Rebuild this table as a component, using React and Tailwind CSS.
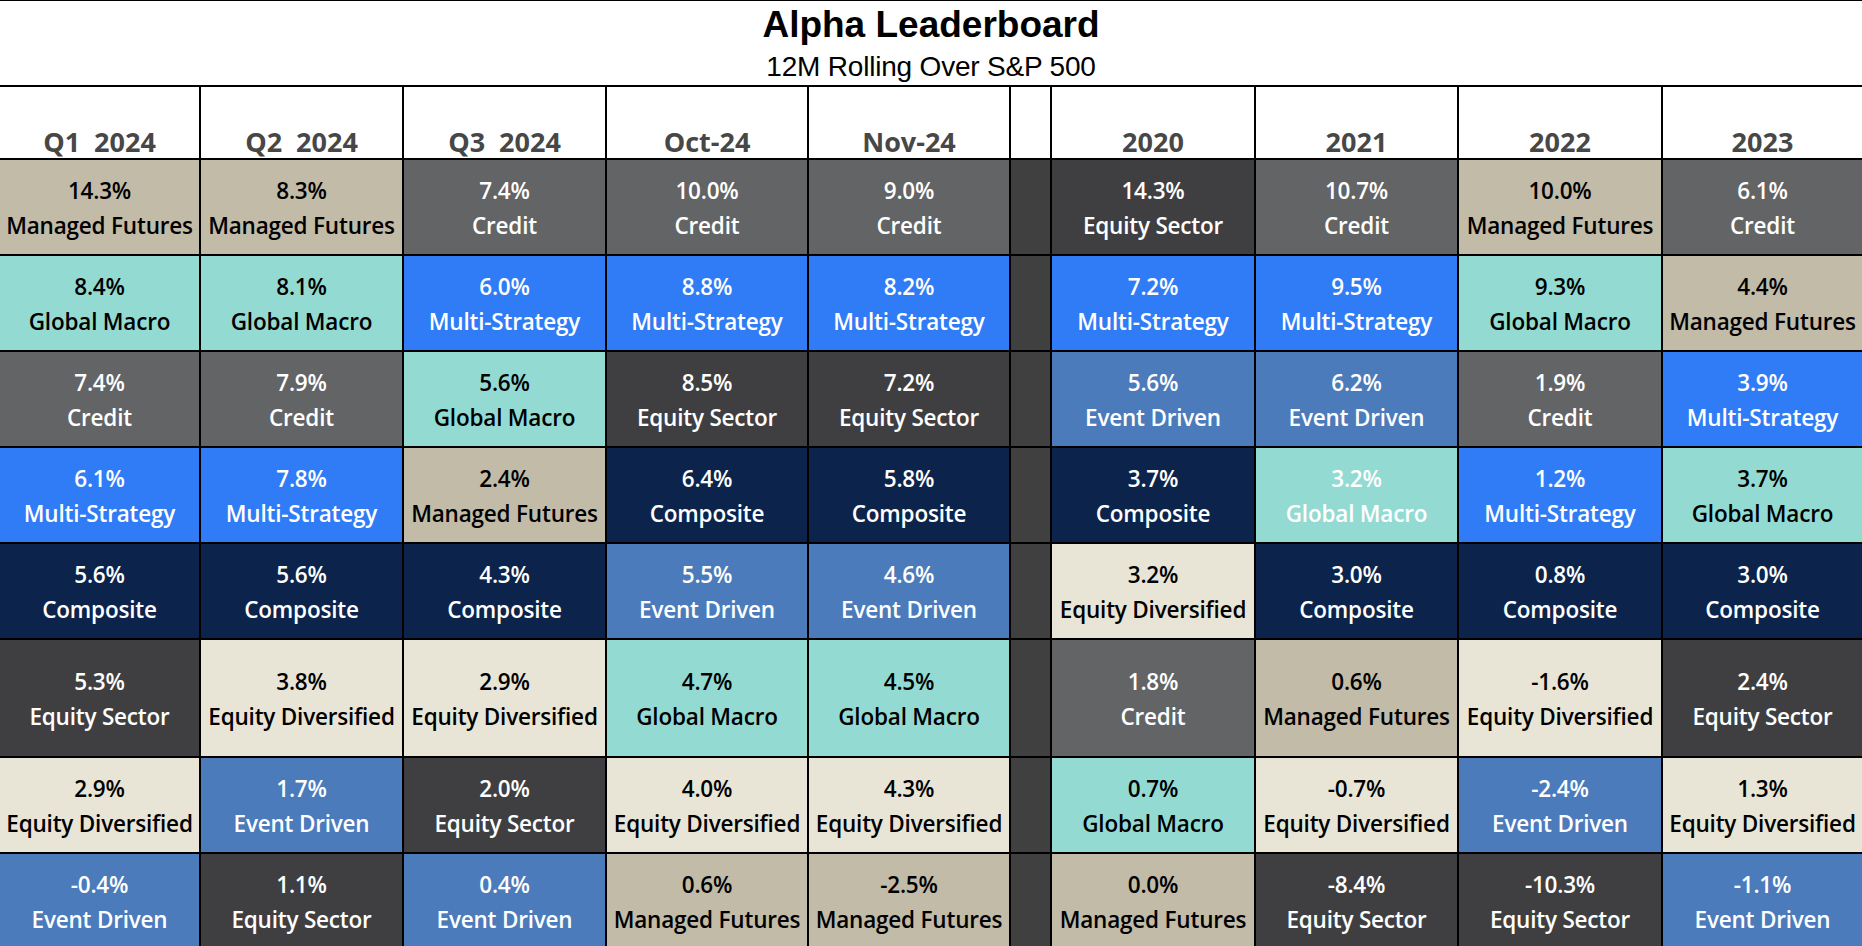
import React from "react";

// category -> cell colours
const cats = {
  MF: { name: "Managed Futures", cls: "bg-[#c1bba8] text-black" },
  GM: { name: "Global Macro", cls: "bg-[#93dbd2] text-black" },
  CR: { name: "Credit", cls: "bg-[#636466] text-white" },
  MS: { name: "Multi-Strategy", cls: "bg-[#2f7cf6] text-white" },
  ES: { name: "Equity Sector", cls: "bg-[#3f3f42] text-white" },
  CO: { name: "Composite", cls: "bg-[#0c244b] text-white" },
  EV: { name: "Event Driven", cls: "bg-[#4b7bbb] text-white" },
  ED: { name: "Equity Diversified", cls: "bg-[#e8e5d6] text-black" },
};

const left = [
  {
    title: "Q1  2024",
    cells: [["14.3%", "MF"], ["8.4%", "GM"], ["7.4%", "CR"], ["6.1%", "MS"], ["5.6%", "CO"], ["5.3%", "ES"], ["2.9%", "ED"], ["-0.4%", "EV"]],
  },
  {
    title: "Q2  2024",
    cells: [["8.3%", "MF"], ["8.1%", "GM"], ["7.9%", "CR"], ["7.8%", "MS"], ["5.6%", "CO"], ["3.8%", "ED"], ["1.7%", "EV"], ["1.1%", "ES"]],
  },
  {
    title: "Q3  2024",
    cells: [["7.4%", "CR"], ["6.0%", "MS"], ["5.6%", "GM"], ["2.4%", "MF"], ["4.3%", "CO"], ["2.9%", "ED"], ["2.0%", "ES"], ["0.4%", "EV"]],
  },
  {
    title: "Oct-24",
    cells: [["10.0%", "CR"], ["8.8%", "MS"], ["8.5%", "ES"], ["6.4%", "CO"], ["5.5%", "EV"], ["4.7%", "GM"], ["4.0%", "ED"], ["0.6%", "MF"]],
  },
  {
    title: "Nov-24",
    cells: [["9.0%", "CR"], ["8.2%", "MS"], ["7.2%", "ES"], ["5.8%", "CO"], ["4.6%", "EV"], ["4.5%", "GM"], ["4.3%", "ED"], ["-2.5%", "MF"]],
  },
];

const right = [
  {
    title: "2020",
    cells: [["14.3%", "ES"], ["7.2%", "MS"], ["5.6%", "EV"], ["3.7%", "CO"], ["3.2%", "ED"], ["1.8%", "CR"], ["0.7%", "GM"], ["0.0%", "MF"]],
  },
  {
    title: "2021",
    cells: [["10.7%", "CR"], ["9.5%", "MS"], ["6.2%", "EV"], ["3.2%", "GM", true], ["3.0%", "CO"], ["0.6%", "MF"], ["-0.7%", "ED"], ["-8.4%", "ES"]],
  },
  {
    title: "2022",
    cells: [["10.0%", "MF"], ["9.3%", "GM"], ["1.9%", "CR"], ["1.2%", "MS"], ["0.8%", "CO"], ["-1.6%", "ED"], ["-2.4%", "EV"], ["-10.3%", "ES"]],
  },
  {
    title: "2023",
    cells: [["6.1%", "CR"], ["4.4%", "MF"], ["3.9%", "MS"], ["3.7%", "GM"], ["3.0%", "CO"], ["2.4%", "ES"], ["1.3%", "ED"], ["-1.1%", "EV"]],
  },
];

const HeadCell = ({ children }) => (
  <div className="bg-white flex items-end justify-center pb-[1px] text-[27px] leading-[30px] font-bold text-[#474747] whitespace-pre">
    {children}
  </div>
);

const Cell = ({ pct, cat, white }) => {
  const c = cats[cat];
  return (
    <div
      className={`${c.cls} ${white ? "!text-white" : ""} flex flex-col items-center justify-center pt-[2px] text-[22.5px] leading-[35px] font-semibold tracking-[-0.2px] whitespace-nowrap overflow-hidden`}
    >
      <span>{pct}</span>
      <span>{c.name}</span>
    </div>
  );
};

export default function App() {
  const rows = [0, 1, 2, 3, 4, 5, 6, 7];
  return (
    <div className="h-screen w-full overflow-hidden bg-white">
      <div className="border-t border-black h-[85px] flex flex-col items-center font-['Liberation_Sans',Arial,sans-serif] text-black">
        <div className="text-[37px] leading-[40px] font-bold mt-[4px]">Alpha Leaderboard</div>
        <div className="text-[28px] leading-[32px] mt-[6px] tracking-[-0.2px]">12M Rolling Over S&amp;P 500</div>
      </div>
      <div
        className="grid bg-black gap-[2px] pt-[2px] font-['Open_Sans','Noto_Sans',sans-serif] grid-cols-[199px_201px_201px_200px_200px_39px_202px_201px_202px_1fr] grid-rows-[71px_94px_94px_94px_94px_94px_116px_94px_94px]"
      >
        {left.map((col) => (
          <HeadCell key={col.title}>{col.title}</HeadCell>
        ))}
        <div className="bg-white" />
        {right.map((col) => (
          <HeadCell key={col.title}>{col.title}</HeadCell>
        ))}
        {rows.map((r) => (
          <React.Fragment key={r}>
            {left.map((col) => (
              <Cell key={col.title} pct={col.cells[r][0]} cat={col.cells[r][1]} white={col.cells[r][2]} />
            ))}
            <div className="bg-[#404040]" />
            {right.map((col) => (
              <Cell key={col.title} pct={col.cells[r][0]} cat={col.cells[r][1]} white={col.cells[r][2]} />
            ))}
          </React.Fragment>
        ))}
      </div>
    </div>
  );
}
